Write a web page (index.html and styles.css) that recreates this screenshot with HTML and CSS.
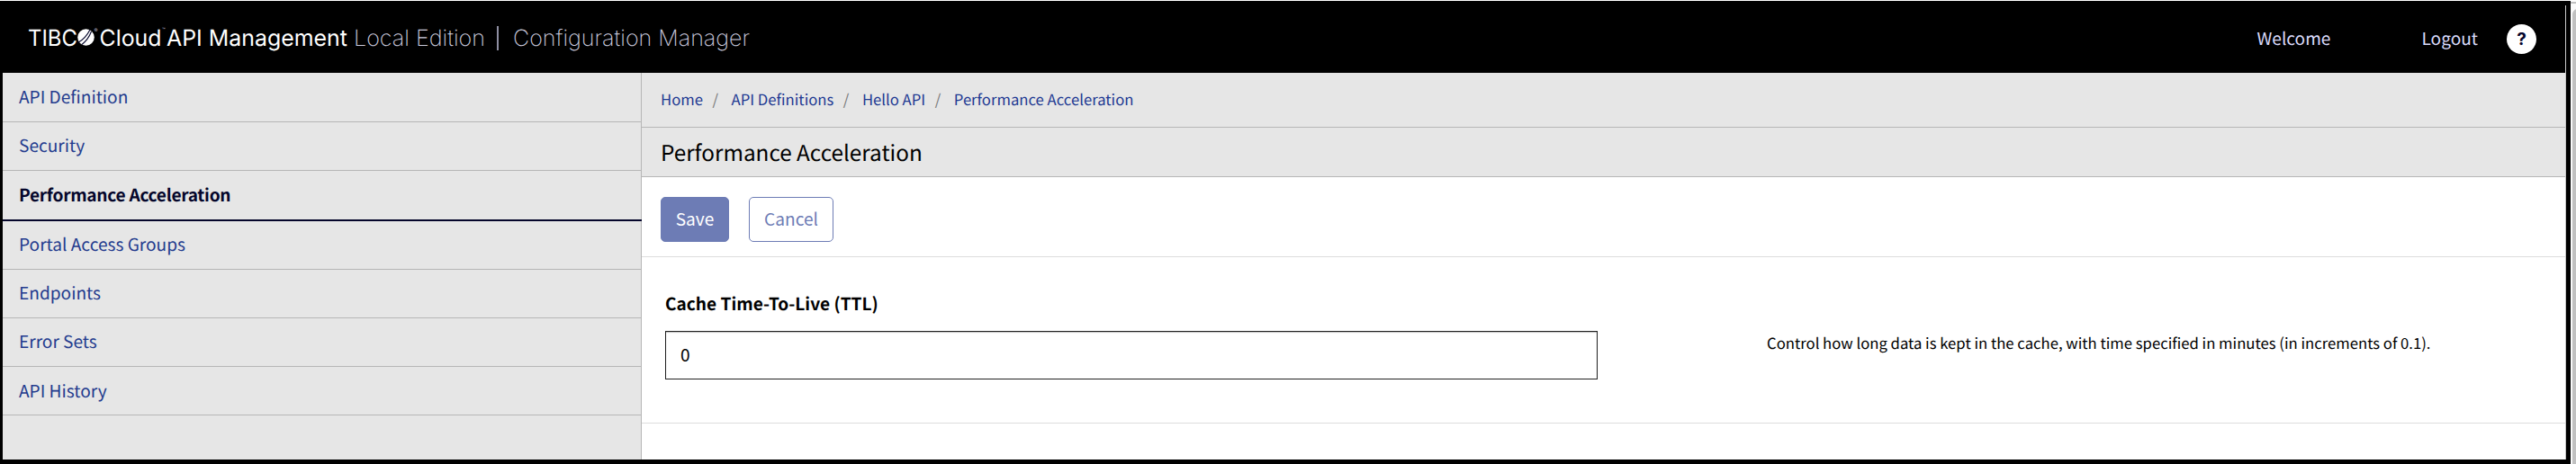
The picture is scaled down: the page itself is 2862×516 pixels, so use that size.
FILE: index.html
```html
<!DOCTYPE html>
<html lang="en">
<head>
<meta charset="utf-8">
<title>Configuration Manager</title>
<link rel="stylesheet" href="styles.css">
</head>
<body>
<div class="frame">
  <div class="window">
    <header class="topbar">
      <svg class="brand" width="840" height="80" viewBox="0 0 840 80" role="img" aria-label="TIBCO Cloud API Management">
        <text class="brand-bold" x="28" y="50" textLength="55" lengthAdjust="spacingAndGlyphs">TIBC</text>
        <circle cx="92.500" cy="40.500" r="9.300" fill="#fff"/>
        <path d="M83.500 46.500Q92 42 97 32M88 48.500Q95 43 98.500 34" fill="none" stroke="#05062b" stroke-width="1.100"/>
        <text class="brand-mark" x="101.500" y="35">®</text>
        <text class="brand-bold" x="107.500" y="50" textLength="69" lengthAdjust="spacingAndGlyphs">Cloud</text>
        <text class="brand-mark" x="177" y="34" textLength="5">™</text>
        <text class="brand-bold" x="182" y="50" textLength="201" lengthAdjust="spacingAndGlyphs">API Management</text>
        <text class="brand-light" x="390" y="50" textLength="146" lengthAdjust="spacingAndGlyphs">Local Edition</text>
        <path d="M550 28V55" stroke="#8e8ea2" stroke-width="2"/>
        <text class="brand-light" x="567" y="50" textLength="263" lengthAdjust="spacingAndGlyphs">Configuration Manager</text>
      </svg>
      <nav class="account">
        <a class="welcome">Welcome</a>
        <a class="logout">Logout</a>
        <span class="help">?</span>
      </nav>
    </header>
    <div class="body">
      <nav class="sidebar">
        <a class="item">API Definition</a>
        <a class="item">Security</a>
        <a class="item active">Performance Acceleration</a>
        <a class="item">Portal Access Groups</a>
        <a class="item">Endpoints</a>
        <a class="item">Error Sets</a>
        <a class="item">API History</a>
      </nav>
      <main class="main">
        <div class="crumbs"><a>Home</a><i>/</i><a>API Definitions</a><i>/</i><a>Hello API</a><i>/</i><a>Performance Acceleration</a></div>
        <h1 class="title">Performance Acceleration</h1>
        <div class="actions">
          <button class="btn primary">Save</button>
          <button class="btn">Cancel</button>
        </div>
        <div class="form">
          <div class="field">
            <label class="label" for="ttl">Cache Time-To-Live (TTL)</label>
            <input class="input" id="ttl" value="0">
          </div>
          <p class="hint">Control how long data is kept in the cache, with time specified in minutes (in increments of 0.1).</p>
        </div>
      </main>
    </div>
  </div>
  <div class="edge"></div>
  <div class="scroll"><div class="thumb"></div></div>
</div>
</body>
</html>
```

FILE: styles.css
```css
* { box-sizing: border-box; }
body {
  margin: 0;
  background: #fff;
  font-family: "Noto Sans CJK SC", "Noto Sans", sans-serif;
  font-size: 19.1px;
  line-height: 30px;
  color: #000;
  text-rendering: geometricPrecision;
}
.frame { display: flex; height: 516px; padding-top: 1px; }
.window { width: 2851px; padding-left: 3px; background: #000; border-bottom: 5px solid #000; display: flex; flex-direction: column; }
.edge { width: 5px; background: #000; }
.scroll { flex: 1; border-top: 2px solid #c1c1c1; margin-top: 1px; padding: 6px 0 0 2px; background: #fafafa; overflow: hidden; }
.thumb { width: 12px; height: 520px; border-radius: 6px; background: #c1c1c1; }

.topbar { height: 80px; display: flex; justify-content: space-between; background: linear-gradient(#ccc, #ccc) right 5px / 1px 75px no-repeat #000; }
.brand { display: block; font-family: Inter, "Open Sans", sans-serif; font-size: 25px; }
.brand-bold { fill: #fff; font-weight: 400; }
.brand-light { fill: #c9c9dc; font-weight: 200; }
.brand-mark { fill: #b5b5c8; font-size: 6px; }
.account { display: flex; align-items: center; padding: 5px 33px 0 0; color: #d9dafa; }
.account a { padding-bottom: 3px; }
.logout { margin-left: 101px; }
.help { width: 33px; height: 33px; margin-left: 32px; border-radius: 50%; background: #fff; color: #05062b; font: bold 19px/34px Inter, sans-serif; text-align: center; }

.body { flex: 1; display: flex; border-right: 1px solid #c4c4c4; }
.sidebar { width: 710px; background: #e6e6e6; border-right: 1px solid #b6b6b6; }
.item { display: block; height: 54px; padding: 10px 18px 0; border-bottom: 1px solid #b6b6b6; color: #243c8e; }
.item:first-child { height: 55px; padding-top: 11px; }
.item:last-child { padding-top: 11px; }
.item.active { height: 56px; padding-top: 11px; border-bottom: 2px solid #05062b; color: #05062b; font-weight: 700; letter-spacing: -.27px; margin-right: -1px; }

.main { flex: 1; background: #fff; }
.crumbs { height: 61px; padding: 14px 0 0 21px; background: #e6e6e6; border-bottom: 1px solid #b6b6b6; font-size: 16.7px; color: #1f3a93; }
.crumbs i { font-style: normal; color: #777; margin: 0 14.5px 0 10.5px; }
.title { margin: 0; height: 55px; padding: 12px 0 0 21px; background: #e6e6e6; border-bottom: 1px solid #b6b6b6; font-size: 24.3px; font-weight: 400; }
.actions { height: 89px; padding: 22px 0 0 21px; display: flex; gap: 22px; border-bottom: 1px solid #ddd; }
.btn { height: 50px; width: 94px; padding: 0 0 2px; border: 1px solid #6d7cb5; border-radius: 5px; background: #fff; color: #6d7cb5; font: inherit; }
.btn.primary { width: 76px; background: #6d7cb5; color: #fff; }
.form { height: 185px; padding: 36px 0 0 26px; display: flex; border-bottom: 1px solid #ddd; }
.field { width: 1036px; }
.label { display: block; height: 46px; font-weight: 700; }
.input { display: block; width: 100%; height: 54px; padding: 0 16px 2px; border: 1px solid #222; border-radius: 0; box-shadow: inset 0 1px 1px rgba(0, 0, 0, .25); background: #fff; font: inherit; outline: 0; }
.hint { margin: 44px 0 0 188px; font-size: 16.7px; white-space: nowrap; }
```
